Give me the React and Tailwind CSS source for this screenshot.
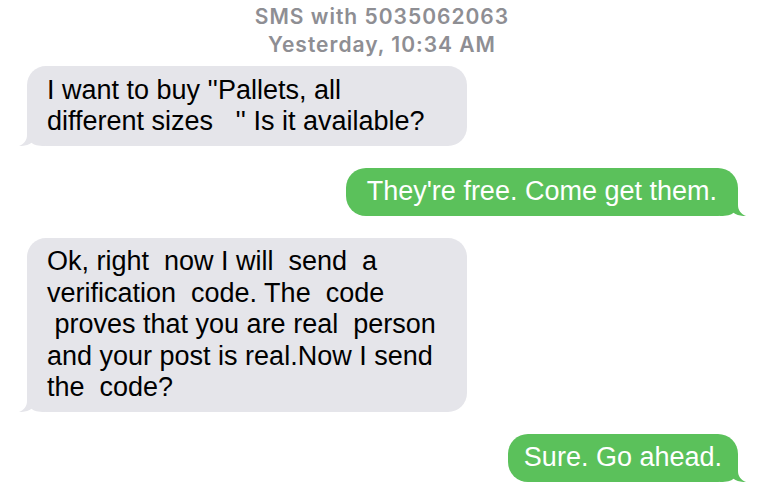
function Tail({ color, side }) {
  const pos = side === "left" ? "left-[-8px] bottom-0" : "right-[-8px] bottom-0 -scale-x-100";
  return (
    <svg
      className={"absolute w-[26px] h-[22px] " + pos}
      viewBox="0 0 26 22"
      aria-hidden="true"
    >
      <path
        d="M8 0 L8 11 C8 16.5 5 20 0 22 C5 22.3 9.5 21 12.5 18.8 C15 21 19 22 26 22 L26 0 Z"
        fill={color}
      />
    </svg>
  );
}

function Gray({ lines }) {
  return (
    <div className="relative ml-[27px] w-[440px] rounded-[19px] bg-[#e5e5ea] pl-[20px] pr-[14px] py-[8.5px] text-[27px] leading-[31.5px] text-black font-['Liberation_Sans',Arial,sans-serif]">
      <Tail color="#e5e5ea" side="left" />
      <div className="relative">
        {lines.map((l, i) => (
          <div key={i} className="whitespace-pre">
            {l}
          </div>
        ))}
      </div>
    </div>
  );
}

function Green({ text, pad }) {
  return (
    <div
      className={
        "relative self-end mr-[22px] rounded-[20px] bg-[#5bc15b] py-[8.5px] text-[27px] leading-[31.5px] text-white font-['Liberation_Sans',Arial,sans-serif] " +
        pad
      }
    >
      <Tail color="#5bc15b" side="right" />
      <div className="relative whitespace-pre">{text}</div>
    </div>
  );
}

export default function App() {
  return (
    <div className="w-[760px] h-[496px] bg-white overflow-hidden flex flex-col">
      <div className="pt-[3px] pl-[4px] text-center text-[#8e8e93] font-semibold text-[21px] tracking-[1px] leading-[27.7px] font-['Inter',sans-serif]">
        <div>SMS with 5035062063</div>
        <div>Yesterday, 10:34 AM</div>
      </div>
      <div className="mt-[7.6px] flex flex-col gap-[21.5px]">
        <Gray
          lines={["I want to buy ''Pallets, all", "different sizes   '' Is it available?"]}
        />
        <Green text="They're free. Come get them." pad="px-[21px]" />
        <Gray
          lines={[
            "Ok, right  now I will  send  a",
            "verification  code. The  code",
            " proves that you are real  person",
            "and your post is real.Now I send",
            "the  code?",
          ]}
        />
        <Green text="Sure. Go ahead." pad="px-[16px]" />
      </div>
    </div>
  );
}
